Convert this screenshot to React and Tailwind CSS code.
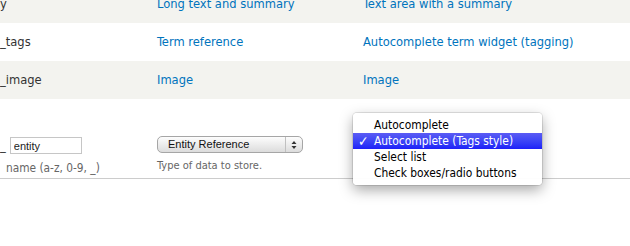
const rows = [
  { name: "y", type: "Long text and summary", widget: "Text area with a summary", bg: "bg-[#f3f3ef]" },
  { name: "_tags", type: "Term reference", widget: "Autocomplete term widget (tagging)", bg: "bg-white" },
  { name: "_image", type: "Image", widget: "Image", bg: "bg-[#f3f3ef]" },
];

const options = ["Autocomplete", "Autocomplete (Tags style)", "Select list", "Check boxes/radio buttons"];

const lucida = { fontFamily: "'DejaVu Sans Condensed', 'DejaVu Sans', sans-serif", fontStretch: "condensed" };
const helvetica = { fontFamily: "'Liberation Sans', Arial, sans-serif" };

export default function App() {
  return (
    <div className="relative w-[630px] h-[246px] overflow-hidden bg-white text-[12.8px] text-[#333]" style={lucida}>
      <div className="-mt-[15px]">
        {rows.map((r, i) => (
          <div key={i} className={`flex items-center h-[38px] ${r.bg}`}>
            <div className="w-[157px] shrink-0">{r.name}</div>
            <div className="w-[206px] shrink-0 text-[#0074bd]">{r.type}</div>
            <div className="text-[#0074bd]">{r.widget}</div>
          </div>
        ))}
      </div>

      {/* Add new field row */}
      <div className="flex h-[80px] pt-[37px] border-b border-[#cccccc]">
        <div className="w-[157px] shrink-0">
          <div className="flex items-center gap-[4px]">
            <span>_</span>
            <input
              readOnly
              value="entity"
              className="w-[72px] h-[17px] border border-[#c6c6c6] px-[3px] text-[11px] text-[#222] outline-none"
              style={helvetica}
            />
          </div>
          <div className="mt-[5px] ml-[6px] text-[11.8px] text-[#666]">name (a-z, 0-9, _)</div>
        </div>
        <div className="w-[206px] shrink-0">
          <div
            className="flex items-center justify-between w-[146px] h-[17px] rounded-[5px] border border-[#a6a6a6] bg-gradient-to-b from-[#fdfdfd] to-[#dcdcdc] pl-[10px] pr-[5px] text-[11px] text-[#111]"
            style={helvetica}
          >
            <span>Entity Reference</span>
            <div className="flex items-center h-full border-l border-[#c0c0c0] pl-[5px]">
              <svg width="6" height="10" viewBox="0 0 6 10">
                <path d="M3 1 L5.5 4 H0.5 Z M3 9 L5.5 6 H0.5 Z" fill="#333" />
              </svg>
            </div>
          </div>
          <div className="mt-[5px] text-[11px] text-[#666]">Type of data to store.</div>
        </div>
      </div>

      {/* Open select menu */}
      <div className="absolute left-[353px] top-[113px] w-[189px] rounded-[4px] bg-white/95 py-[4px] shadow-[0_5px_14px_rgba(0,0,0,0.35)] ring-1 ring-black/10 text-[11.9px] text-black">
        {options.map((o, i) => (
          <div
            key={o}
            className={`relative h-[16px] leading-[16px] pl-[21px] ${i === 1 ? "bg-gradient-to-b from-[#5b5bf4] to-[#1e1ef8] text-white" : ""}`}
          >
            {i === 1 && <span className="absolute left-[5px] top-0 text-[14px] font-bold leading-[16px]">✓</span>}
            {o}
          </div>
        ))}
      </div>
    </div>
  );
}
